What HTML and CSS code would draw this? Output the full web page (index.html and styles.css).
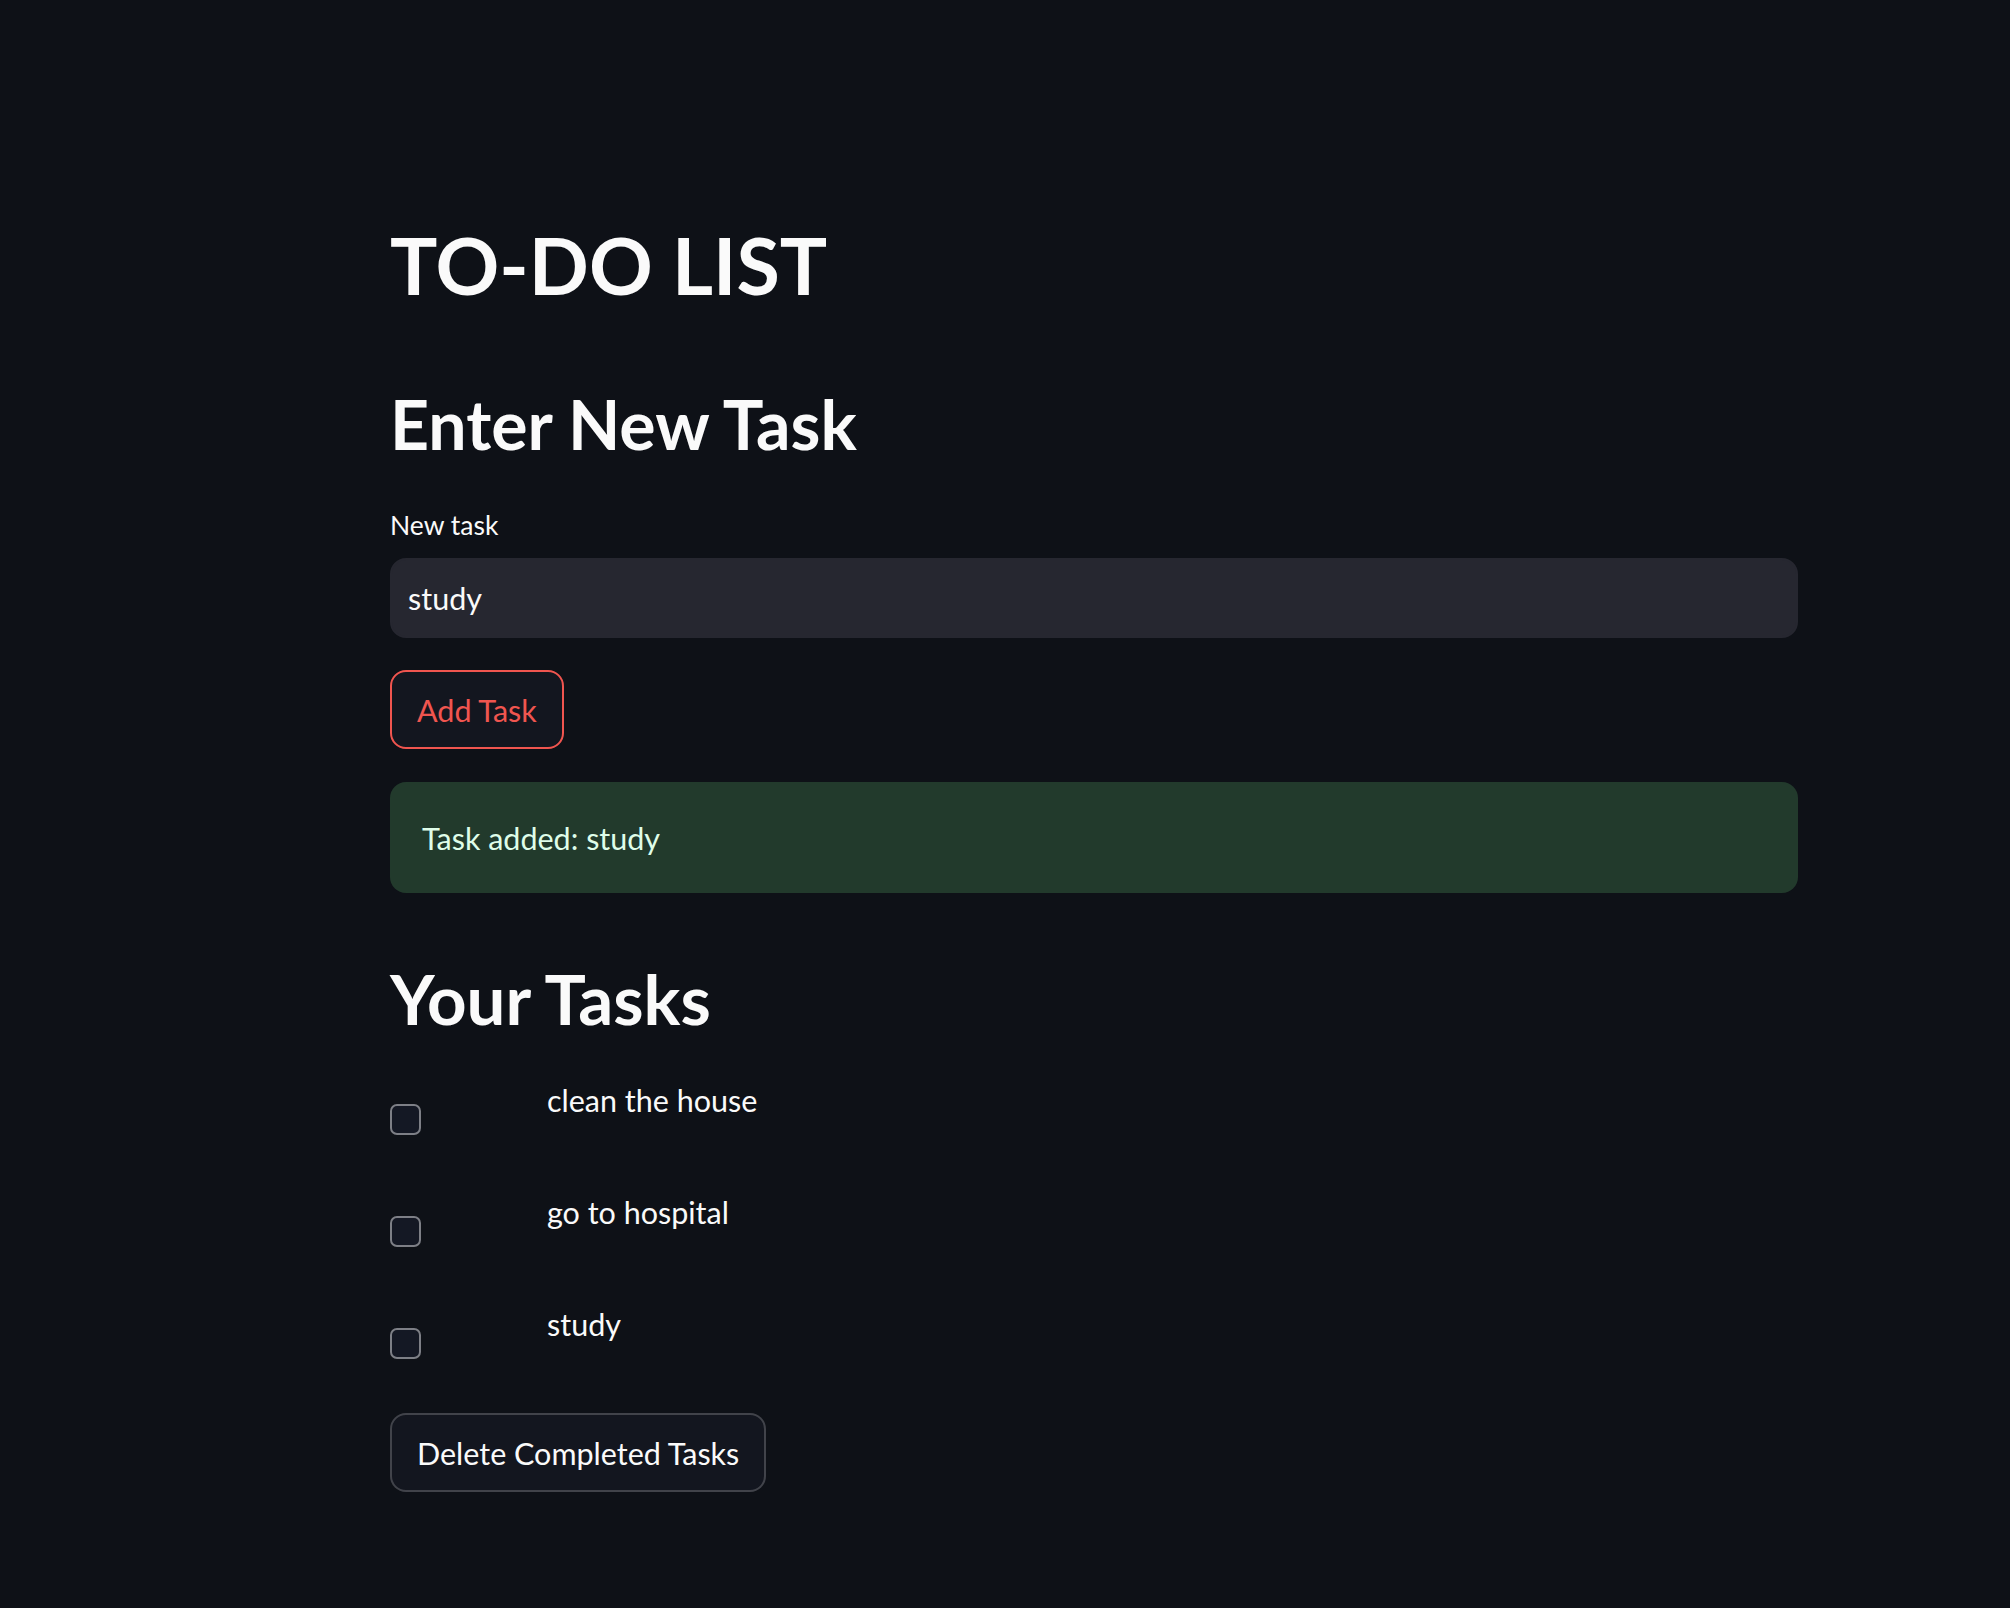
FILE: index.html
```html
<!DOCTYPE html>
<html lang="en">
<head>
<meta charset="utf-8">
<title>TO-DO LIST</title>
<link rel="stylesheet" href="styles.css">
</head>
<body>
<div class="app">
  <main class="block">
    <h1 class="title">TO-DO LIST</h1>
    <h2 class="heading">Enter New Task</h2>
    <label class="field-label" for="task">New task</label>
    <input class="text-input" id="task" type="text" value="study">
    <button class="btn btn-active">Add Task</button>
    <div class="alert-success">Task added: study</div>
    <h2 class="heading heading-tasks">Your Tasks</h2>
    <div class="task-list">
      <div class="task-row">
        <div class="col-check"><span class="checkbox"></span></div>
        <div class="col-text">clean the house</div>
      </div>
      <div class="task-row">
        <div class="col-check"><span class="checkbox"></span></div>
        <div class="col-text">go to hospital</div>
      </div>
      <div class="task-row">
        <div class="col-check"><span class="checkbox"></span></div>
        <div class="col-text">study</div>
      </div>
    </div>
    <button class="btn">Delete Completed Tasks</button>
  </main>
</div>
</body>
</html>
```

FILE: styles.css
```css
html, body {
  margin: 0;
  padding: 0;
  background: #0e1117;
}

body {
  width: 2010px;
  min-height: 1608px;
  color: #fafafa;
  font-family: "Lato", "Noto Sans", sans-serif;
}

.app {
  padding-top: 206px;
  padding-left: 390px;
}

.block {
  width: 1408px;
  display: flex;
  flex-direction: column;
  align-items: flex-start;
}

.title {
  margin: 0;
  font-size: 79px;
  font-weight: 700;
  line-height: 118px;
  height: 118px;
}

.heading {
  margin: 50px 0 0 0;
  font-size: 68px;
  font-weight: 700;
  line-height: 100px;
  height: 100px;
}

.heading-tasks {
  margin-top: 56px;
  font-size: 69px;
}

.field-label {
  margin-top: 31px;
  font-size: 26.5px;
  line-height: 40px;
  height: 40px;
}

.text-input {
  margin: 13px 0 0 0;
  box-sizing: border-box;
  width: 1408px;
  height: 80px;
  padding: 0 16px;
  border: 2px solid #262730;
  border-radius: 16px;
  background: #262730;
  color: #fafafa;
  font-family: inherit;
  font-size: 30.5px;
  outline: none;
}

.btn {
  box-sizing: border-box;
  height: 79px;
  padding: 0 25px;
  border: 2px solid rgba(250, 250, 250, 0.2);
  border-radius: 16px;
  background: #13161f;
  color: #fafafa;
  font-family: inherit;
  font-size: 30.5px;
  margin-top: 32px;
}

.btn-active {
  border-color: #f0554f;
  color: #f0554f;
}

.alert-success {
  margin-top: 33px;
  box-sizing: border-box;
  width: 1408px;
  height: 111px;
  padding: 0 32px;
  border-radius: 16px;
  background: #223a2c;
  color: #dffde9;
  font-size: 30.5px;
  display: flex;
  align-items: center;
}

.task-list {
  margin-top: 26px;
  width: 1408px;
  display: flex;
  flex-direction: column;
}

.task-row {
  height: 112px;
  display: grid;
  grid-template-columns: 125px 1fr;
  column-gap: 32px;
}

.col-check {
  padding-top: 29px;
}

.checkbox {
  display: block;
  box-sizing: border-box;
  width: 31px;
  height: 31px;
  border: 2px solid #7d7f86;
  border-radius: 7px;
  background: #141824;
}

.col-text {
  font-size: 30.5px;
  line-height: 51px;
}

.task-list + .btn {
  margin-top: 2px;
}
```
